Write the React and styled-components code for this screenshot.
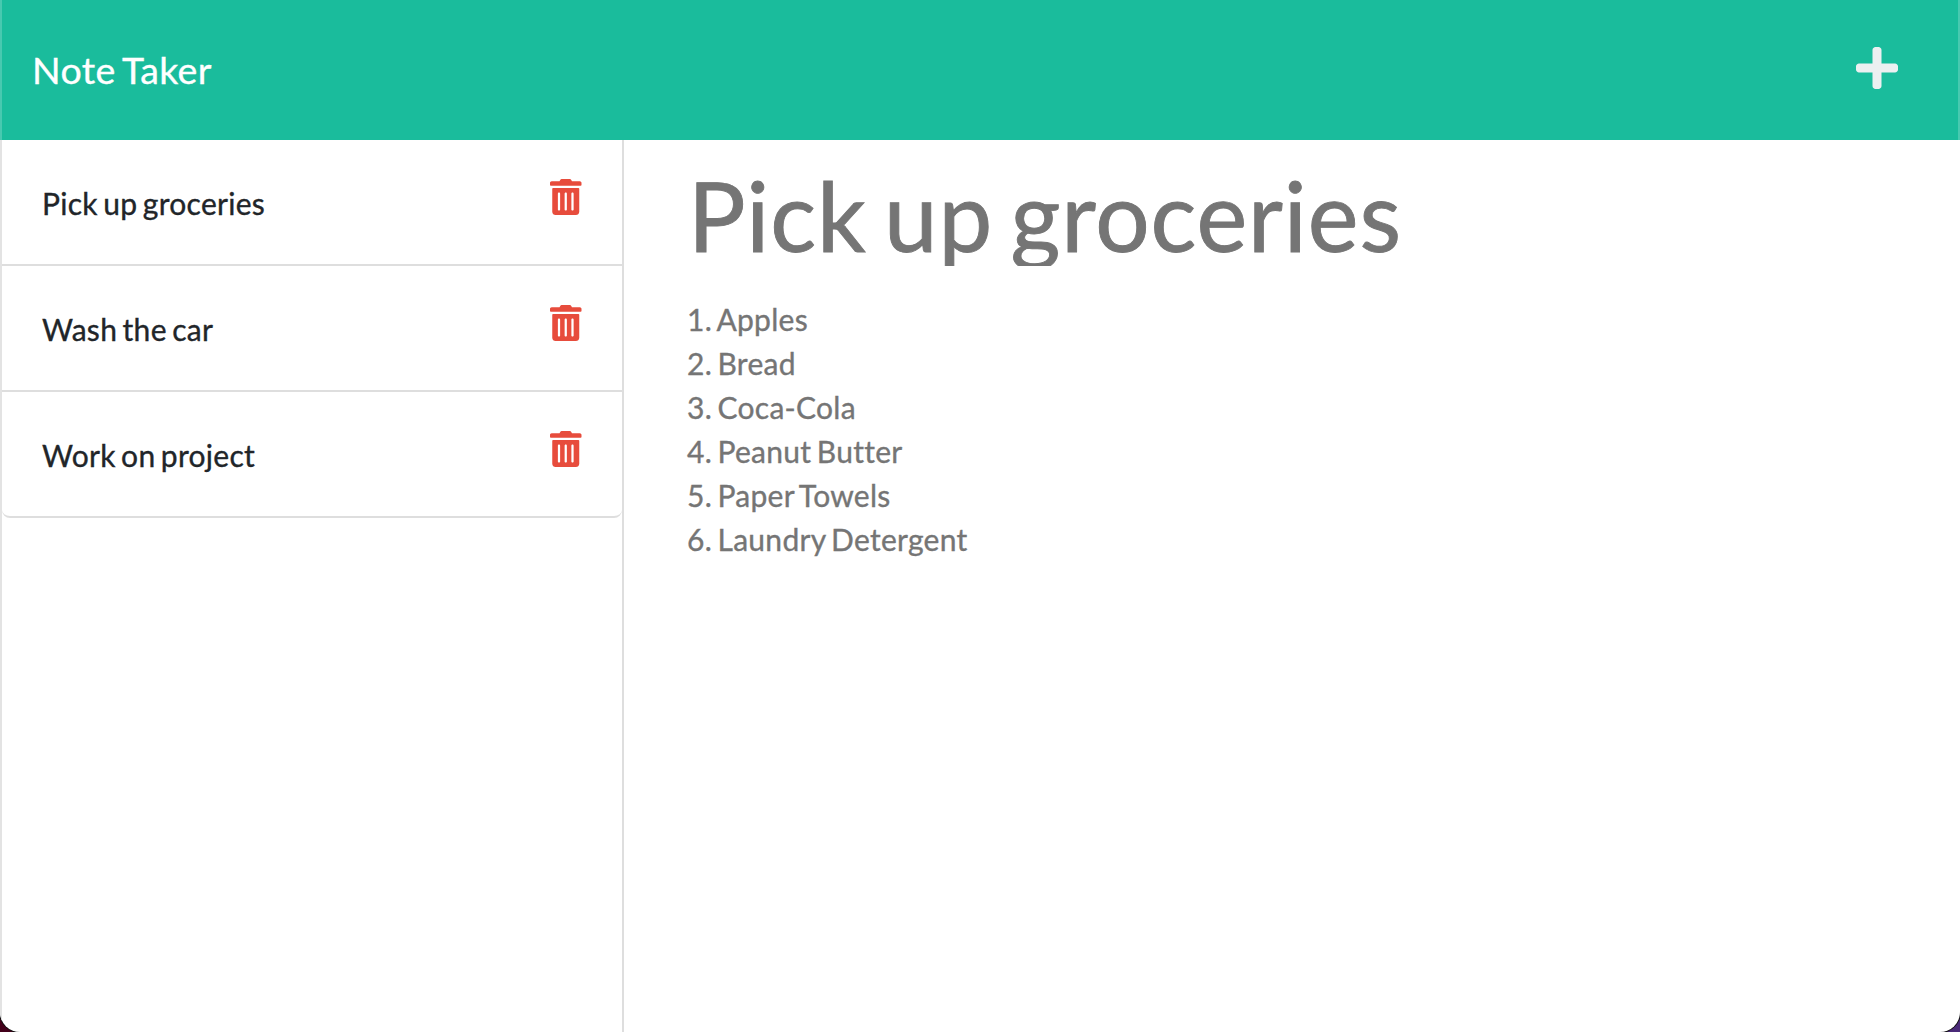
import React from 'react';
import styled, { createGlobalStyle } from 'styled-components';
import { FaPlus } from 'react-icons/fa';

const GlobalStyle = createGlobalStyle`
  *, *::before, *::after { box-sizing: border-box; }
  body {
    margin: 0;
    font-family: Lato, 'Liberation Sans', sans-serif;
    font-size: 30px;
    line-height: 1.5;
    color: #212529;
    background: #fff;
    font-variant-ligatures: none;
    -webkit-text-stroke: 0.35px currentColor;
  }
`;

const Desktop = styled.div`
  height: 1032px;
  background: linear-gradient(to right, #43001a, #4a2a78);
`;

const Page = styled.div`
  display: flex;
  flex-direction: column;
  height: 100%;
  overflow: hidden;
  background: #fff;
  border-radius: 0 0 20px 20px;
  box-shadow: 0 0 0 1px #111;
`;

const Navbar = styled.nav`
  display: flex;
  flex: none;
  align-items: center;
  justify-content: space-between;
  height: 140px;
  padding: 0 60px 0 30px;
  background: #1abc9c;
  border: solid #48c9b0;
  border-width: 0 2px;
`;

const Text = styled.span`
  letter-spacing: 0.0095em;
  word-spacing: -0.085em;
`;

const Brand = styled(Text)`
  font-size: 37.5px;
  line-height: 56px;
  word-spacing: -0.065em;
  color: #fff;
`;

const IconButton = styled.button`
  display: flex;
  padding: 0;
  border: 0;
  background: none;
  color: ${(p) => p.$color};
  font-size: ${(p) => p.$size};
  margin: ${(p) => p.$margin};
`;

const TrashGlyph = styled.svg`
  width: 0.875em;
  height: 1em;
  fill: currentColor;
`;

const Content = styled.main`
  display: flex;
  flex: 1;
  min-height: 0;
`;

const Sidebar = styled.aside`
  width: 624px;
  border-left: 2px solid #e3e3e3;
  border-right: 2px solid #dedede;
`;

const NoteList = styled.ul`
  margin: 0;
  padding: 0;
  list-style: none;
`;

const NoteItem = styled.li`
  display: flex;
  align-items: flex-start;
  justify-content: space-between;
  height: 126px;
  padding: 39px 40px 0;
  border-bottom: 2px solid #dedede;

  &:last-child { border-radius: 0 0 8px 8px; }
`;

const NoteName = styled(Text)`
  line-height: 48px;
`;

const Editor = styled.section`
  flex: 1;
  padding: 30px 64px 0;
`;

const Title = styled(Text).attrs({ as: 'h1' })`
  height: 96px;
  margin: 0;
  overflow: hidden;
  font-size: 96px;
  font-weight: 400;
  line-height: 89px;
  color: #757575;
  -webkit-text-stroke-width: 0.9px;
`;

const Body = styled(Text).attrs({ as: 'div' })`
  display: block;
  margin: 31px 0 0 -1px;
  line-height: 44px;
  white-space: pre-wrap;
  color: #757575;
`;

const TrashIcon = () => (
  <TrashGlyph viewBox="0 0 448 512" aria-hidden="true">
    <path d="M0 84V56c0-13.3 10.7-24 24-24h112l9.4-18.7c4-8.2 12.3-13.3 21.4-13.3h114.3c9.1 0 17.4 5.1 21.5 13.3L312 32h112c13.3 0 24 10.7 24 24v28c0 6.600-5.400 12-12 12H12C5.400 96 0 90.600 0 84zm416 56v324c0 26.500-21.500 48-48 48H80c-26.500 0-48-21.500-48-48V140c0-6.600 5.400-12 12-12h360c6.600 0 12 5.400 12 12zm-272 68c0-8.800-7.200-16-16-16s-16 7.200-16 16v224c0 8.800 7.200 16 16 16s16-7.200 16-16V208zm96 0c0-8.800-7.200-16-16-16s-16 7.200-16 16v224c0 8.800 7.200 16 16 16s16-7.200 16-16V208zm96 0c0-8.800-7.200-16-16-16s-16 7.200-16 16v224c0 8.800 7.200 16 16 16s16-7.200 16-16V208z" />
  </TrashGlyph>
);

const notes = ['Pick up groceries', 'Wash the car', 'Work on project'];

const text = [
  '1. Apples',
  '2. Bread',
  '3. Coca-Cola',
  '4. Peanut Butter',
  '5. Paper Towels',
  '6. Laundry Detergent',
].join('\n');

export default function App() {
  return (
    <Desktop>
      <GlobalStyle />
      <Page>
        <Navbar>
          <Brand>Note Taker</Brand>
          <IconButton $color="#ecf0f1" $size="48px" $margin="-4px -3px 0 0" aria-label="New note">
            <FaPlus />
          </IconButton>
        </Navbar>
        <Content>
          <Sidebar>
            <NoteList>
              {notes.map((name) => (
                <NoteItem key={name}>
                  <NoteName>{name}</NoteName>
                  <IconButton $color="#e74c3c" $size="36px" $margin="0 0.5px 0 0" aria-label="Delete note">
                    <TrashIcon />
                  </IconButton>
                </NoteItem>
              ))}
            </NoteList>
          </Sidebar>
          <Editor>
            <Title>{notes[0]}</Title>
            <Body>{text}</Body>
          </Editor>
        </Content>
      </Page>
    </Desktop>
  );
}
